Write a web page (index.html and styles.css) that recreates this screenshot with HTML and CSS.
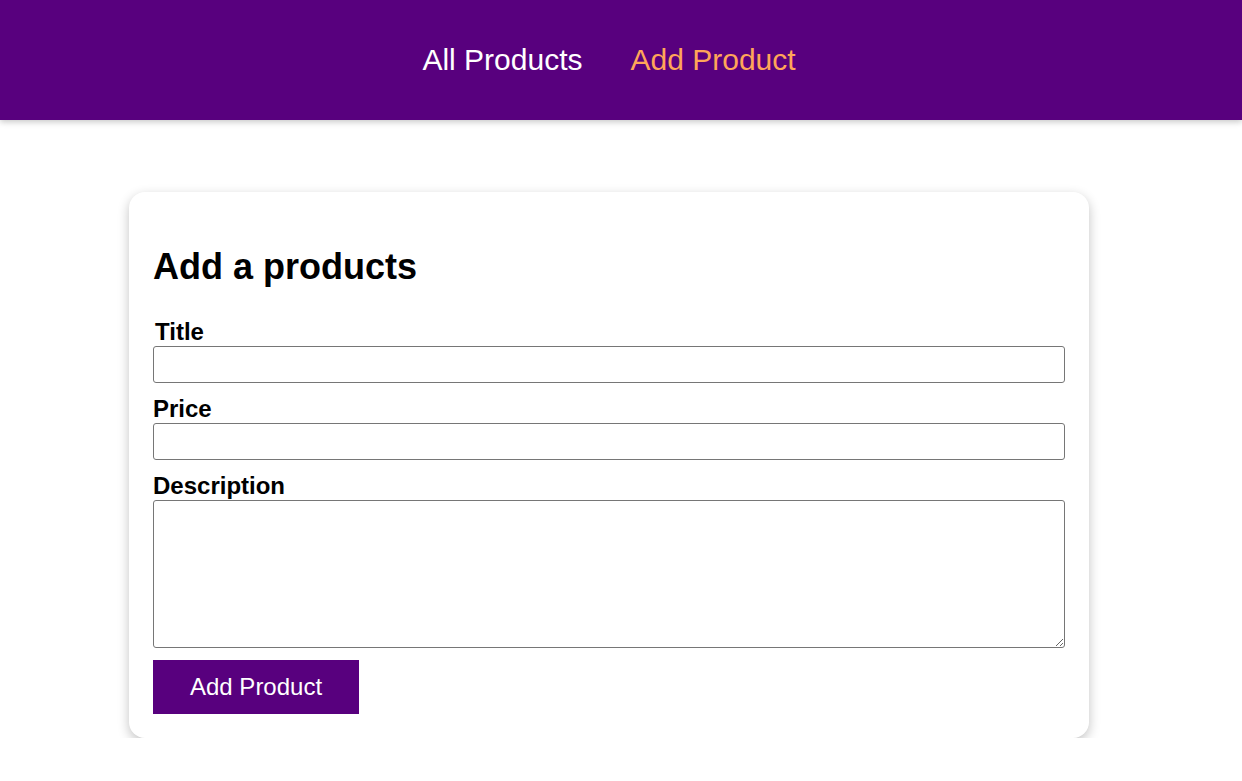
FILE: index.html
```html
<!DOCTYPE html>
<html lang="en">
<head>
<meta charset="utf-8">
<title>Add Product</title>
<link rel="stylesheet" href="styles.css">
</head>
<body>
<header class="topbar">
  <nav class="nav">
    <a class="nav-link" href="#">All Products</a>
    <a class="nav-link active" href="#">Add Product</a>
  </nav>
</header>
<main class="page">
  <form class="card">
    <h2 class="card-title">Add a products</h2>
    <div class="field">
      <label class="field-label field-label-title" for="title">Title</label>
      <input class="field-input" id="title" type="text">
    </div>
    <div class="field">
      <label class="field-label" for="price">Price</label>
      <input class="field-input" id="price" type="text">
    </div>
    <div class="field">
      <label class="field-label" for="desc">Description</label>
      <textarea class="field-input field-textarea" id="desc"></textarea>
    </div>
    <div class="field">
      <button class="submit" type="button">Add Product</button>
    </div>
  </form>
</main>
</body>
</html>
```

FILE: styles.css
```css
* { box-sizing: border-box; }

html, body {
  margin: 0;
  padding: 0;
  background: #ffffff;
  font-family: "Liberation Sans", Arial, sans-serif;
  color: #000;
}

.topbar {
  height: 120px;
  background: #58007e;
  box-shadow: 0 2px 6px rgba(0, 0, 0, 0.22);
  display: flex;
  align-items: center;
  justify-content: center;
  padding-right: 24px;
}

.nav {
  display: flex;
  gap: 48px;
}

.nav-link {
  font-size: 30px;
  color: #ffffff;
  text-decoration: none;
}

.nav-link.active {
  color: #ffa559;
}

.page {
  display: flex;
  justify-content: center;
  padding: 72px 24px 0 0;
}

.card {
  width: 960px;
  background: #fff;
  border-radius: 16px;
  box-shadow: 0 4px 12px rgba(0, 0, 0, 0.24);
  padding: 24px;
}

.card-title {
  font-size: 36px;
  font-weight: bold;
  margin: 30px 0;
}

.field {
  display: flex;
  flex-direction: column;
  margin-top: 12px;
}

.card-title + .field { margin-top: 0; }

.field-label {
  font-size: 24px;
  font-weight: bold;
  line-height: normal;
}

.field-label-title {
  padding-left: 2px;
}

.field-input {
  display: block;
  width: 100%;
  height: 37px;
  border: 1px solid #767676;
  border-radius: 3px;
  padding: 2px 6px;
  font-family: "Liberation Sans", Arial, sans-serif;
  font-size: 16px;
  background: #fff;
}

.field-textarea {
  height: 148px;
  resize: both;
}

.submit {
  align-self: flex-start;
  height: 54px;
  padding: 0 37px;
  border: none;
  background: #58007e;
  color: #ffffff;
  font-family: "Liberation Sans", Arial, sans-serif;
  font-size: 24px;
  cursor: pointer;
}
```
